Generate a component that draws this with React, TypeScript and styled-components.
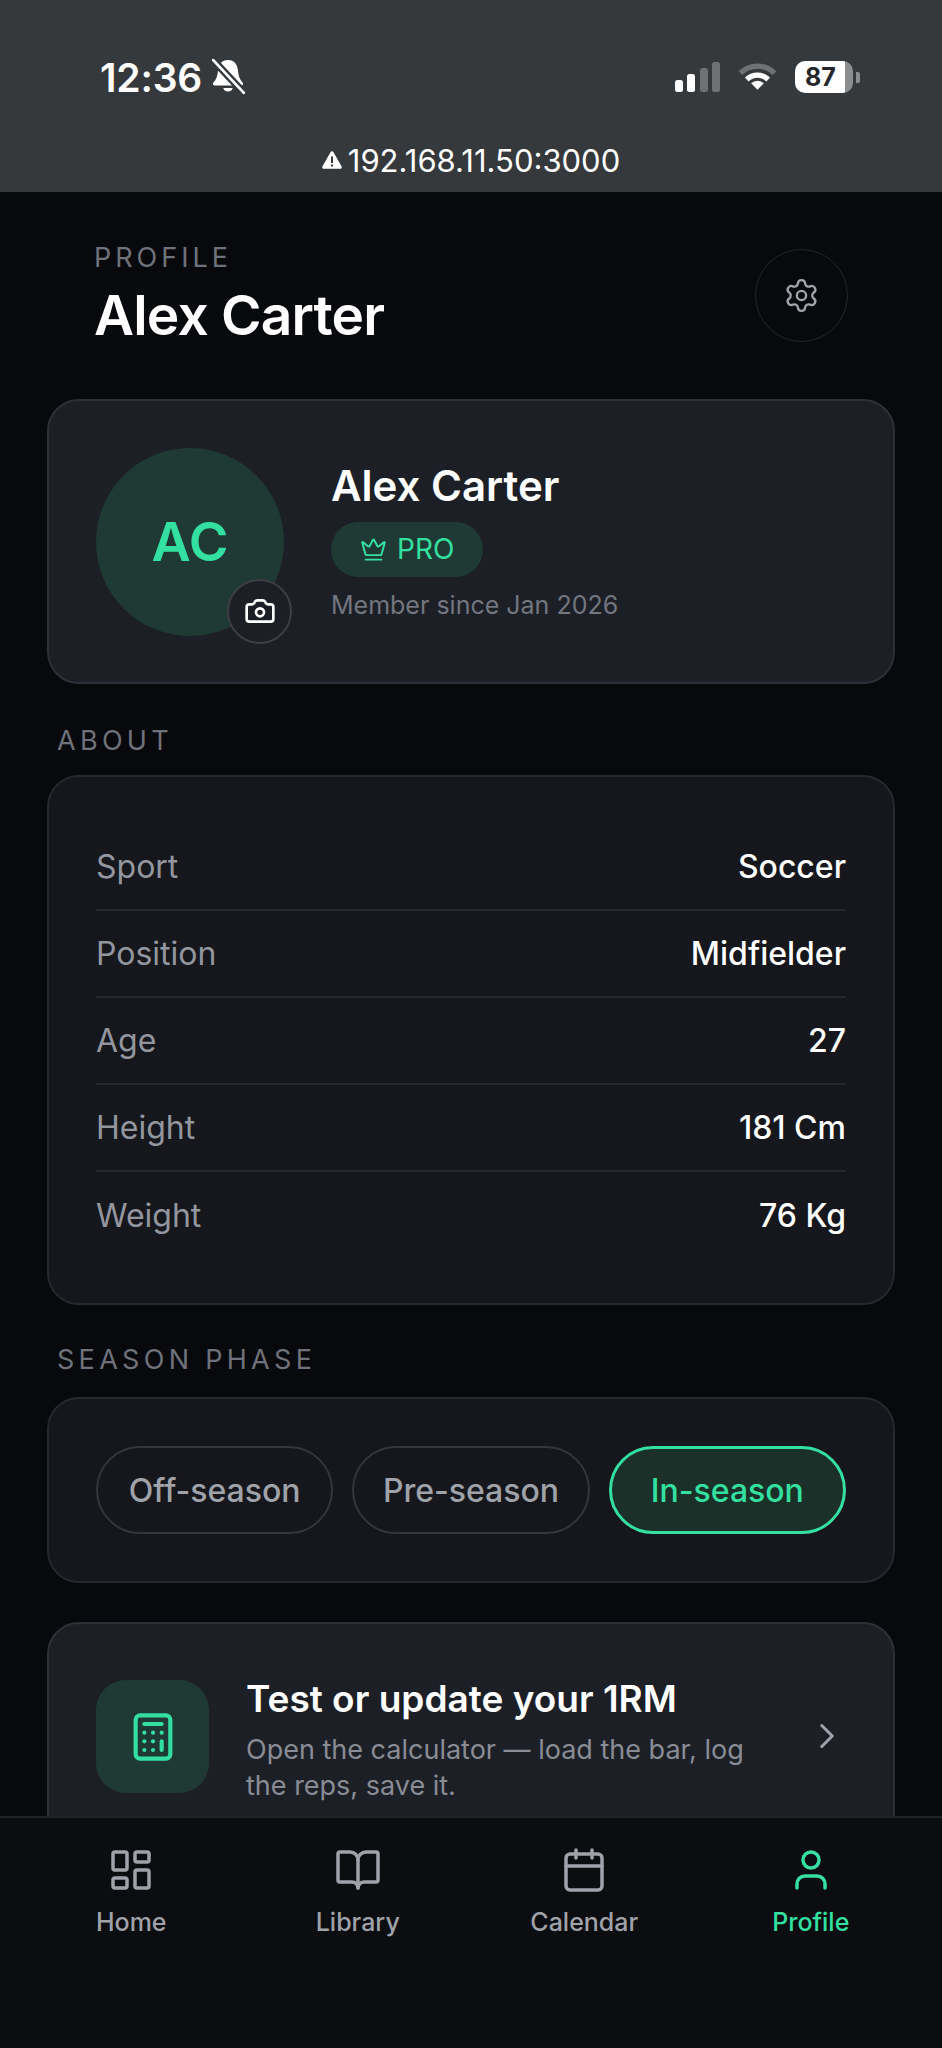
import React from "react";
import styled, { createGlobalStyle } from "styled-components";
import {
  BookOpen,
  Calculator,
  Calendar,
  Camera,
  ChevronRight,
  Crown,
  LayoutDashboard,
  Settings,
  User,
} from "lucide-react";

const GlobalStyle = createGlobalStyle`
  html, body {
    margin: 0;
    padding: 0;
    background: #07090c;
  }
  * {
    box-sizing: border-box;
  }
`;

const Phone = styled.div`
  width: 942px;
  height: 2048px;
  display: flex;
  flex-direction: column;
  overflow: hidden;
  background: #07090c;
  color: #fff;
  font-family: Inter, "Liberation Sans", sans-serif;
`;

const BrowserBar = styled.header`
  flex: none;
  height: 192px;
  padding: 55px 82px 0 100px;
  background: #36393c;
`;

const StatusRow = styled.div`
  display: flex;
  align-items: center;
  justify-content: space-between;
  height: 44px;
`;

const TimeGroup = styled.div`
  display: flex;
  align-items: center;
  gap: 8px;
`;

const Time = styled.span`
  font-size: 39px;
  font-weight: 600;
  letter-spacing: -0.2px;
`;

const StatusIcons = styled.div`
  display: flex;
  align-items: center;
  gap: 18px;
`;

const Battery = styled.div`
  display: flex;
  align-items: center;
  gap: 3px;
`;

const BatteryBody = styled.div`
  width: 58px;
  height: 32px;
  display: flex;
  align-items: center;
  justify-content: center;
  padding-right: 7px;
  border-radius: 10px;
  background: linear-gradient(90deg, #fff 87%, #8b8d8f 87%);
  color: #25272a;
  font-size: 25px;
  font-weight: 700;
`;

const BatteryTip = styled.div`
  width: 4px;
  height: 11px;
  border-radius: 0 2px 2px 0;
  background: #8b8d8f;
`;

const AddressRow = styled.div`
  display: flex;
  align-items: center;
  justify-content: center;
  gap: 6px;
  margin: 39px -82px 0 -100px;
  height: 44px;
  font-size: 31px;
  font-weight: 400;
`;

const Content = styled.main`
  flex: 1;
  min-height: 0;
  overflow: hidden;
  padding: 0 47px;
`;

const PageHeader = styled.div`
  display: flex;
  align-items: flex-start;
  justify-content: space-between;
  padding: 49px 47px 0;
  height: 207px;
`;

const Eyebrow = styled.div`
  font-size: 27px;
  line-height: 34px;
  letter-spacing: 4px;
  color: #6f727a;
`;

const PageTitle = styled.h1`
  margin: 9px 0 0;
  font-size: 55px;
  line-height: 62px;
  font-weight: 600;
  letter-spacing: -0.8px;
  color: #fff;
`;

const GhostButton = styled.button`
  width: 93px;
  height: 93px;
  margin-top: 8px;
  display: flex;
  align-items: center;
  justify-content: center;
  padding: 0;
  border: 1.5px solid #24262b;
  border-radius: 50%;
  background: transparent;
  color: #a2a4ab;
`;

const Card = styled.section<{ $raised?: boolean }>`
  border: 2px solid ${(props) => (props.$raised ? "#2d3036" : "#26282d")};
  border-radius: 32px;
  background: ${(props) => (props.$raised ? "#1c1f26" : "#15171c")};
`;

const ProfileCard = styled(Card)`
  height: 285px;
  display: flex;
  align-items: center;
  gap: 47px;
  padding: 0 47px;
`;

const AvatarWrap = styled.div`
  position: relative;
  flex: none;
  width: 188px;
  height: 188px;
`;

const Avatar = styled.div`
  width: 100%;
  height: 100%;
  display: flex;
  align-items: center;
  justify-content: center;
  border-radius: 50%;
  background: #1f3a34;
  color: #34e0a1;
  font-size: 54px;
  font-weight: 600;
`;

const CameraBadge = styled.div`
  position: absolute;
  right: -8px;
  bottom: -8px;
  width: 65px;
  height: 65px;
  display: flex;
  align-items: center;
  justify-content: center;
  border: 2px solid #3d3f44;
  border-radius: 50%;
  background: #1c1f26;
  color: #fff;
`;

const ProfileInfo = styled.div`
  display: flex;
  flex-direction: column;
  align-items: flex-start;
  margin-top: -2px;
`;

const ProfileName = styled.div`
  font-size: 42px;
  line-height: 50px;
  font-weight: 600;
`;

const ProBadge = styled.div`
  display: flex;
  align-items: center;
  gap: 10px;
  height: 55px;
  margin-top: 11px;
  padding: 0 29px;
  border-radius: 28px;
  background: #1f3a34;
  color: #34e0a1;
  font-size: 28px;
`;

const MemberSince = styled.div`
  margin-top: 12px;
  font-size: 25px;
  line-height: 32px;
  color: #73767f;
`;

const SectionLabel = styled.div<{ $top: number; $bottom: number }>`
  margin-top: ${(props) => props.$top}px;
  margin-bottom: ${(props) => props.$bottom}px;
  padding-left: 10px;
  font-size: 27px;
  line-height: 34px;
  letter-spacing: 4.300px;
  color: #6f727a;
`;

const AboutCard = styled(Card)`
  padding: 47px 47px 44px;
`;

const InfoRow = styled.div`
  display: flex;
  align-items: center;
  justify-content: space-between;
  height: 87px;
  font-size: 32px;
  border-bottom: 2px solid #26282d;

  &:last-child {
    border-bottom: 0;
  }
`;

const InfoLabel = styled.span`
  color: #94969f;
`;

const InfoValue = styled.span`
  font-weight: 500;
  color: #fff;
`;

const PhaseCard = styled(Card)`
  display: grid;
  grid-template-columns: repeat(3, 1fr);
  gap: 19px;
  padding: 47px;
`;

const PhasePill = styled.button<{ $active?: boolean }>`
  height: 88px;
  padding: 0;
  border: ${(props) => (props.$active ? "3px solid #34e0a1" : "2px solid #34363c")};
  border-radius: 44px;
  background: ${(props) => (props.$active ? "#1b3029" : "transparent")};
  color: ${(props) => (props.$active ? "#34e0a1" : "#a0a2a9")};
  font-family: inherit;
  font-size: 32px;
  font-weight: 500;
`;

const CalculatorCard = styled(Card)`
  margin-top: 39px;
  display: flex;
  align-items: flex-start;
  padding: 56px 47px 80px;
`;

const IconTile = styled.div`
  flex: none;
  width: 113px;
  height: 113px;
  display: flex;
  align-items: center;
  justify-content: center;
  border-radius: 30px;
  background: #1f3a34;
  color: #34e0a1;
`;

const CalculatorText = styled.div`
  flex: 1;
  margin-left: 37px;
  margin-top: -4px;
`;

const CalculatorTitle = styled.div`
  font-size: 37px;
  line-height: 46px;
  font-weight: 600;
`;

const CalculatorSub = styled.div`
  width: 520px;
  margin-top: 10px;
  font-size: 27px;
  line-height: 36px;
  color: #8a8c95;
`;

const Chevron = styled.div`
  flex: none;
  height: 42px;
  margin: 35px -2px 0 0;
  color: #a0a2a9;
`;

const TabBar = styled.nav`
  flex: none;
  height: 232px;
  display: grid;
  grid-template-columns: repeat(4, 1fr);
  align-items: start;
  padding: 28px 18px 0;
  border-top: 2px solid #1f2126;
  background: #0b0d11;
`;

const Tab = styled.div<{ $active?: boolean }>`
  display: flex;
  flex-direction: column;
  align-items: center;
  gap: 11px;
  color: ${(props) => (props.$active ? "#34e0a1" : "#a0a2a9")};
  font-size: 25px;
  line-height: 34px;
  font-weight: 500;
`;

const aboutRows = [
  ["Sport", "Soccer"],
  ["Position", "Midfielder"],
  ["Age", "27"],
  ["Height", "181 Cm"],
  ["Weight", "76 Kg"],
];

const tabs = [
  { label: "Home", Icon: LayoutDashboard },
  { label: "Library", Icon: BookOpen },
  { label: "Calendar", Icon: Calendar },
  { label: "Profile", Icon: User, active: true },
];

const BellOff = () => (
  <svg width="36" height="38" viewBox="0 0 34 36">
    <path
      d="M17 2c-6 0-9 4.500-9.500 10-.4 5-1.500 8-4.500 11.500-.8 1-.2 2.500 1.200 2.500h25.600c1.400 0 2-1.500 1.200-2.500C28 20 26.900 17 26.500 12 26 6.500 23 2 17 2z"
      fill="#fff"
    />
    <path d="M12.500 28.500a4.700 4.700 0 0 0 9 0z" fill="#fff" />
    <path d="M3 2l29 31" stroke="#36393c" strokeWidth="7" />
    <path d="M3 2l29 31" stroke="#fff" strokeWidth="2.600" strokeLinecap="round" />
  </svg>
);

const SignalBars = () => (
  <svg width="45" height="30" viewBox="0 0 45 30">
    <rect x="0" y="18" width="8" height="12" rx="2.500" fill="#fff" />
    <rect x="12" y="12" width="8" height="18" rx="2.500" fill="#fff" />
    <rect x="25" y="6" width="8" height="24" rx="2.500" fill="#6f7173" />
    <rect x="37" y="0" width="8" height="30" rx="2.500" fill="#6f7173" />
  </svg>
);

const WifiIcon = () => (
  <svg width="39" height="30" viewBox="0 0 40 30" fill="none" strokeWidth="5.500">
    <path d="M2.500 11a25 25 0 0 1 35 0" stroke="#6f7173" />
    <path d="M9 17.500a16 16 0 0 1 22 0" stroke="#fff" />
    <path d="M20 28l-6.500-6.500a9.500 9.500 0 0 1 13 0z" fill="#fff" />
  </svg>
);

const WarningIcon = () => (
  <svg width="20" height="18" viewBox="0 0 20 18">
    <path
      d="M8.500 1.200a1.700 1.700 0 0 1 3 0l8 14a1.700 1.700 0 0 1-1.500 2.600H2a1.700 1.700 0 0 1-1.500-2.600z"
      fill="#fff"
    />
    <rect x="9" y="5.500" width="2" height="6.500" fill="#36393c" />
    <rect x="9" y="13.500" width="2" height="2" fill="#36393c" />
  </svg>
);

export default function App() {
  return (
    <Phone>
      <GlobalStyle />
      <BrowserBar>
        <StatusRow>
          <TimeGroup>
            <Time>12:36</Time>
            <BellOff />
          </TimeGroup>
          <StatusIcons>
            <SignalBars />
            <WifiIcon />
            <Battery>
              <BatteryBody>87</BatteryBody>
              <BatteryTip />
            </Battery>
          </StatusIcons>
        </StatusRow>
        <AddressRow>
          <WarningIcon />
          192.168.11.50:3000
        </AddressRow>
      </BrowserBar>

      <Content>
        <PageHeader>
          <div>
            <Eyebrow>PROFILE</Eyebrow>
            <PageTitle>Alex Carter</PageTitle>
          </div>
          <GhostButton>
            <Settings size={37} strokeWidth={1.5} />
          </GhostButton>
        </PageHeader>

        <ProfileCard $raised>
          <AvatarWrap>
            <Avatar>AC</Avatar>
            <CameraBadge>
              <Camera size={32} strokeWidth={2} />
            </CameraBadge>
          </AvatarWrap>
          <ProfileInfo>
            <ProfileName>Alex Carter</ProfileName>
            <ProBadge>
              <Crown size={27} strokeWidth={1.75} />
              PRO
            </ProBadge>
            <MemberSince>Member since Jan 2026</MemberSince>
          </ProfileInfo>
        </ProfileCard>

        <SectionLabel $top={40} $bottom={17}>
          ABOUT
        </SectionLabel>
        <AboutCard>
          {aboutRows.map(([label, value]) => (
            <InfoRow key={label}>
              <InfoLabel>{label}</InfoLabel>
              <InfoValue>{value}</InfoValue>
            </InfoRow>
          ))}
        </AboutCard>

        <SectionLabel $top={38} $bottom={20}>
          SEASON PHASE
        </SectionLabel>
        <PhaseCard>
          <PhasePill>Off-season</PhasePill>
          <PhasePill>Pre-season</PhasePill>
          <PhasePill $active>In-season</PhasePill>
        </PhaseCard>

        <CalculatorCard $raised>
          <IconTile>
            <Calculator size={52} strokeWidth={1.9} />
          </IconTile>
          <CalculatorText>
            <CalculatorTitle>Test or update your 1RM</CalculatorTitle>
            <CalculatorSub>
              Open the calculator — load the bar, log the reps, save it.
            </CalculatorSub>
          </CalculatorText>
          <Chevron>
            <ChevronRight size={42} strokeWidth={1.75} />
          </Chevron>
        </CalculatorCard>
      </Content>

      <TabBar>
        {tabs.map(({ label, Icon, active }) => (
          <Tab key={label} $active={active}>
            <Icon size={48} strokeWidth={1.75} />
            {label}
          </Tab>
        ))}
      </TabBar>
    </Phone>
  );
}
